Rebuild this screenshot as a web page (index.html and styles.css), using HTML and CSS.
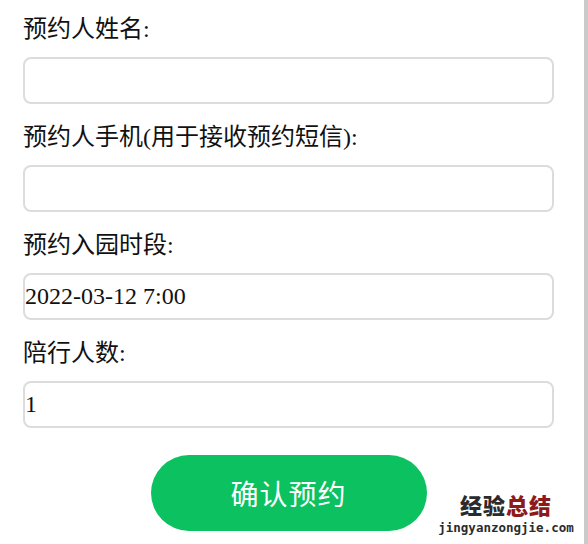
FILE: index.html
```html
<!DOCTYPE html>
<html lang="zh-CN">
<head>
<meta charset="utf-8">
<title>预约</title>
<link rel="stylesheet" href="styles.css">
</head>
<body>
<div class="page">
  <form class="form">
    <div class="group first">
      <label class="label">预约人姓名:</label>
      <input class="field" type="text" value="">
    </div>
    <div class="group">
      <label class="label">预约人手机(用于接收预约短信):</label>
      <input class="field" type="text" value="">
    </div>
    <div class="group">
      <label class="label">预约入园时段:</label>
      <input class="field" type="text" value="2022-03-12 7:00">
    </div>
    <div class="group">
      <label class="label">陪行人数:</label>
      <input class="field" type="text" value="1">
    </div>
    <div class="actions">
      <button class="submit" type="button">确认预约</button>
    </div>
  </form>
  <div class="rail"></div>
</div>
<div class="watermark">
  <div class="wm-title"><span class="wm-dark">经验</span><span class="wm-red">总结</span></div>
  <div class="wm-url">jingyanzongjie.com</div>
</div>
</body>
</html>
```

FILE: styles.css
```css
html, body {
  margin: 0;
  padding: 0;
  background: #fff;
}
body {
  width: 588px;
  height: 544px;
  overflow: hidden;
  position: relative;
  font-family: "Liberation Serif", "Noto Sans CJK SC", serif;
  color: #111;
}
.page {
  display: flex;
  height: 544px;
}
.form {
  flex: 1;
  padding: 0 30px 0 23px;
  display: flex;
  flex-direction: column;
}
.group {
  display: flex;
  flex-direction: column;
  padding-top: 17px;
}
.group.first {
  padding-top: 13px;
}
.label {
  font-size: 24px;
  line-height: 32px;
  height: 32px;
  margin-bottom: 12px;
  white-space: nowrap;
}
.field {
  box-sizing: border-box;
  width: 531px;
  height: 47px;
  border: 2px solid #dcdcdc;
  border-radius: 8px;
  padding: 0;
  margin: 0;
  font-family: "Liberation Serif", "Noto Sans CJK SC", serif;
  font-size: 24px;
  color: #111;
  background: #fff;
  outline: none;
}
.actions {
  display: flex;
  justify-content: center;
  width: 531px;
  padding-top: 27px;
}
.submit {
  width: 276px;
  height: 76px;
  border: none;
  border-radius: 38px;
  background: #0bc160;
  color: #fff;
  font-family: "Noto Sans CJK SC", sans-serif;
  font-size: 28px;
  letter-spacing: 1px;
  padding: 0;
  cursor: pointer;
}
.rail {
  width: 4px;
  background: #cacaca;
}
.watermark {
  position: absolute;
  left: 436px;
  top: 496px;
  width: 140px;
  text-align: center;
}
.wm-title {
  font-family: "Liberation Sans", "Noto Sans CJK SC", sans-serif;
  font-weight: 900;
  font-size: 22px;
  letter-spacing: 1px;
  line-height: 22px;
  height: 22px;
}
.wm-dark { color: #2b2b2b; }
.wm-red { color: #8e1b1b; }
.wm-url {
  font-family: "DejaVu Sans Mono", monospace;
  font-weight: bold;
  font-size: 12.5px;
  line-height: 13px;
  height: 13px;
  color: #2b2b2b;
  margin-top: 3px;
}
```
